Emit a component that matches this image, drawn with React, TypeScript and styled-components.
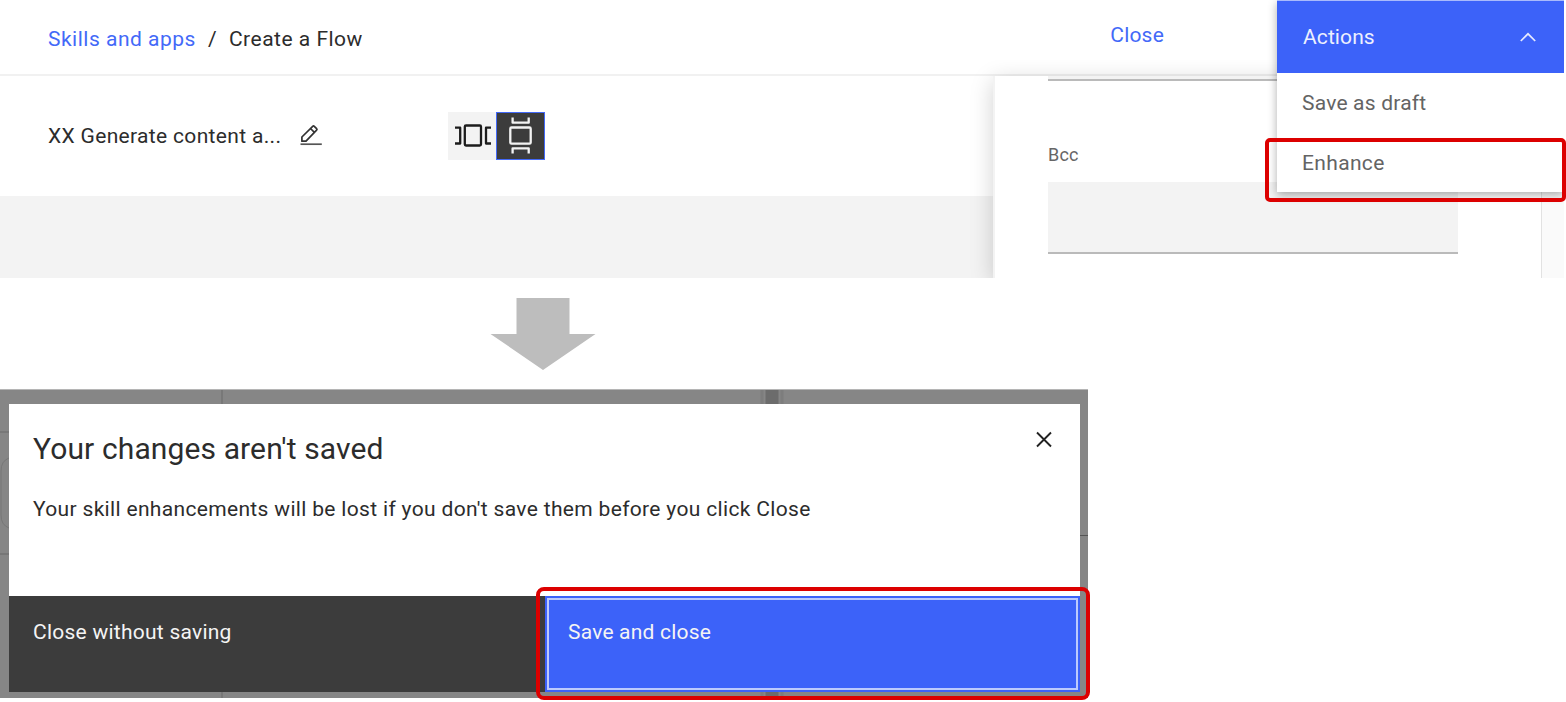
import React from "react";
import styled, { createGlobalStyle } from "styled-components";

const GlobalStyle = createGlobalStyle`
  *, *::before, *::after { box-sizing: border-box; }
  body {
    margin: 0;
    background: #fff;
    color: #2c2c2c;
    font-family: Roboto, "Open Sans", sans-serif;
    font-size: 21px;
    overflow: hidden;
  }
  button { font: inherit; color: inherit; border: 0; background: none; padding: 0; text-align: left; }
`;

const Page = styled.main`
  position: relative;
  width: 1566px;
  height: 702px;
  display: flex;
  flex-direction: column;
  background: #fff;
  overflow: hidden;
`;

const Text = styled.span<{ $track?: number }>`
  display: block;
  white-space: nowrap;
  line-height: 28px;
  letter-spacing: ${(p) => p.$track ?? 0}px;
`;

const Editor = styled.section`
  position: relative;
  width: 1564px;
  height: 278px;
  display: flex;
  flex-direction: column;
  overflow: hidden;
`;

const Header = styled.header`
  height: 76px;
  flex: none;
  display: flex;
  justify-content: space-between;
  padding: 25px 400px 0 48px;
  border-bottom: 2px solid #f1f1f1;
`;

const Breadcrumb = styled.nav`
  display: flex;
`;

const Link = styled(Text)`
  color: #4369f8;
`;

const Slash = styled(Text)`
  width: 33px;
  padding-left: 12px;
`;

const CloseLink = styled(Link)`
  margin-top: -4px;
`;

const Workspace = styled.div`
  flex: 1;
  display: flex;
`;

const Canvas = styled.div`
  width: 993px;
  background: #f3f3f3;
`;

const Toolbar = styled.div`
  height: 120px;
  background: #fff;
  display: flex;
  padding-left: 48px;
`;

const FlowName = styled.div`
  width: 400px;
  display: flex;
  padding-top: 46px;
`;

const NameText = styled(Text)`
  width: 252px;
`;

const Toggle = styled.div`
  display: flex;
  padding-top: 36px;
`;

const ToggleButton = styled.button<{ $active?: boolean }>`
  width: ${(p) => (p.$active ? 49 : 48)}px;
  height: 48px;
  background: ${(p) => (p.$active ? "#3c3c3c" : "#f3f3f3")};
  color: ${(p) => (p.$active ? "#f3f3f3" : "#1c1c1c")};
  border: ${(p) => (p.$active ? "1px solid #4369f8" : "0")};
  display: flex;
  align-items: center;
  justify-content: center;
`;

const Panel = styled.aside`
  position: relative;
  flex: 1;
  display: flex;
  background: #fff;
  border-left: 2px solid #f3f3f3;
  box-shadow: 0 5px 22px rgba(0, 0, 0, 0.18);
  clip-path: inset(-16px 0 0 -40px);
`;

const Form = styled.div`
  width: 546px;
  padding-left: 53px;
`;

const Field = styled.div<{ $height: number }>`
  width: 410px;
  height: ${(p) => p.$height}px;
  background: #f3f3f3;
  border-bottom: 2px solid #bababa;
`;

const FieldLabel = styled(Text)`
  margin: 60px 0 13px;
  font-size: 18px;
  color: #666;
`;

const Scrollbar = styled.div`
  flex: 1;
  background: #fafafa;
  border-left: 1px solid #e2e2e2;
`;

const Menu = styled.div`
  position: absolute;
  top: 0;
  left: 1277px;
  width: 287px;
  height: 192px;
  background: #fff;
  box-shadow: 0 3px 9px rgba(0, 0, 0, 0.32);
`;

const MenuHead = styled.button`
  width: 100%;
  height: 73px;
  display: flex;
  justify-content: space-between;
  padding: 22px 28px 0 26px;
  background: #3c62f9;
  border-top: 1px solid #a9bafc;
  color: #edf0fe;
`;

const MenuItem = styled.div`
  height: 60px;
  padding: 16px 25px;
  color: #646464;
`;

const Highlight = styled.div<{ $x: number; $y: number; $w: number; $h: number; $r: number }>`
  position: absolute;
  left: ${(p) => p.$x}px;
  top: ${(p) => p.$y}px;
  width: ${(p) => p.$w}px;
  height: ${(p) => p.$h}px;
  border: 4px solid #dc0000;
  border-radius: ${(p) => p.$r}px;
`;

const Step = styled.div`
  height: 111px;
  flex: none;
  padding: 19px 0 0 490px;
`;

const Backdrop = styled.section`
  position: relative;
  width: 1087.6px;
  height: 309px;
  flex: none;
  padding: 14px 7.6px 6px 9px;
  background: #868686;
  border-top: 1px solid #b5b5b5;
`;

const BackdropArt = styled.svg`
  position: absolute;
  left: 0;
  top: -1px;
`;

const Dialog = styled.div`
  position: relative;
  height: 288px;
  display: flex;
  flex-direction: column;
  background: #fff;
`;

const DialogBody = styled.div`
  height: 192px;
  display: flex;
  justify-content: space-between;
  padding: 25px 28px 0 24px;
`;

const Title = styled.h2`
  margin: 0 0 26px;
  font-size: 30px;
  font-weight: 400;
  line-height: 40px;
  white-space: nowrap;
  letter-spacing: 0.12px;
`;

const Actions = styled.div`
  height: 96px;
  display: grid;
  grid-template-columns: 536px 535px;
`;

const ActionButton = styled.button<{ $primary?: boolean }>`
  display: flex;
  align-items: flex-start;
  padding: 22px ${(p) => (p.$primary ? 23 : 24)}px;
  color: #f4f4f4;
  background: ${(p) => (p.$primary ? "#3c62f9" : "#3c3c3c")};
  box-shadow: ${(p) =>
    p.$primary ? "inset 0 0 0 2px #3c62f9, inset 0 0 0 4px #bccafd" : "none"};
`;

const Pencil = styled.svg`
  margin-top: 2px;
`;

const PencilIcon = () => (
  <Pencil width="22" height="22" viewBox="0 0 22 22" fill="none" stroke="#333" strokeWidth="1.7" strokeLinejoin="round">
    <path d="M1.9 17.2V13L12.7 2.3Q13.5 1.5 14.3 2.3L16.6 4.600Q17.4 5.4 16.6 6.2L6 17.2Z M10.5 4.500L14.4 8.4" />
    <path d="M.5 20.2H21.8" stroke="#555" />
  </Pencil>
);

const LayoutIcon = ({ vertical }: { vertical?: boolean }) => (
  <svg
    width="38"
    height="38"
    viewBox="0 0 38 38"
    fill="none"
    stroke="currentColor"
    strokeWidth="2.3"
    strokeLinejoin="round"
  >
    {vertical ? (
      <path d="M9.5 10.5H27.5Q28.7 10.5 28.7 11.7V25.5Q28.7 26.7 27.5 26.7H9.5Q8.3 26.7 8.3 25.5V11.7Q8.3 10.5 9.5 10.5ZM10.6 .5V5.700H26.700V.5M10.6 36.5V31.400H26.700V36.5" />
    ) : (
      <path d="M13 8.500H26.8Q28 8.5 28 9.7V27.3Q28 28.5 26.8 28.5H13Q11.8 28.5 11.8 27.3V9.7Q11.8 8.5 13 8.5ZM2 10.7H7.2V26.5H2M38 10.7H33V26.5H38" />
    )}
  </svg>
);

const ChevronUp = () => (
  <svg width="16" height="24" viewBox="0 0 16 24" fill="none" stroke="#e6eafe" strokeWidth="1.7">
    <path d="M.8 18L8 10.8L15.2 18" />
  </svg>
);

const CloseIcon = () => (
  <svg width="16" height="22" viewBox="0 0 16 22" fill="none" stroke="#222" strokeWidth="1.9">
    <path d="M1 3.5L15 17.5M15 3.5L1 17.5" />
  </svg>
);

export default function App() {
  return (
    <>
      <GlobalStyle />
      <Page>
        <Editor>
          <Header>
            <Breadcrumb>
              <Link $track={0.5}>Skills and apps</Link>
              <Slash>/</Slash>
              <Text $track={0.5}>Create a Flow</Text>
            </Breadcrumb>
            <CloseLink $track={0.2}>Close</CloseLink>
          </Header>
          <Workspace>
            <Canvas>
              <Toolbar>
                <FlowName>
                  <NameText $track={0.33}>XX Generate content a...</NameText>
                  <PencilIcon />
                </FlowName>
                <Toggle>
                  <ToggleButton aria-label="Horizontal layout">
                    <LayoutIcon />
                  </ToggleButton>
                  <ToggleButton aria-label="Vertical layout" $active>
                    <LayoutIcon vertical />
                  </ToggleButton>
                </Toggle>
              </Toolbar>
            </Canvas>
            <Panel>
              <Form>
                <Field $height={5} />
                <FieldLabel $track={0.2}>Bcc</FieldLabel>
                <Field $height={72} />
              </Form>
              <Scrollbar />
            </Panel>
          </Workspace>
          <Menu>
            <MenuHead>
              <Text $track={0.1}>Actions</Text>
              <ChevronUp />
            </MenuHead>
            <MenuItem>
              <Text $track={0.2}>Save as draft</Text>
            </MenuItem>
            <MenuItem>
              <Text $track={0.35}>Enhance</Text>
            </MenuItem>
          </Menu>
        </Editor>
        <Step>
          <svg width="106" height="80" viewBox="0 0 106 80">
            <path d="M26.5 1H79.5V37H105.5L53 73L.5 37H26.5Z" fill="#bdbdbd" />
          </svg>
        </Step>
        <Backdrop>
          <BackdropArt width="1088" height="309">
            <path d="M222 1V309M0 43H9" stroke="#747474" strokeWidth="1.5" />
            <path d="M9 69Q1 72 1 82V126Q1 136 9 139" stroke="#777" fill="none" />
            <path d="M0 165H9" stroke="#777" strokeWidth="2" />
            <path d="M772 1V309" stroke="#6c6c6c" strokeWidth="13" />
            <path d="M762 1V309M782 1V309" stroke="#7d7d7d" strokeWidth="3" />
            <path d="M1080 146.5H1088" stroke="#555" />
          </BackdropArt>
          <Dialog>
            <DialogBody>
              <div>
                <Title>Your changes aren't saved</Title>
                <Text $track={0.33}>Your skill enhancements will be lost if you don't save them before you click Close</Text>
              </div>
              <CloseIcon />
            </DialogBody>
            <Actions>
              <ActionButton>
                <Text $track={0.25}>Close without saving</Text>
              </ActionButton>
              <ActionButton $primary>
                <Text $track={0.2}>Save and close</Text>
              </ActionButton>
            </Actions>
          </Dialog>
        </Backdrop>
        <Highlight $x={1265} $y={138} $w={301} $h={64} $r={5} />
        <Highlight $x={536} $y={587} $w={554} $h={113} $r={8} />
      </Page>
    </>
  );
}
